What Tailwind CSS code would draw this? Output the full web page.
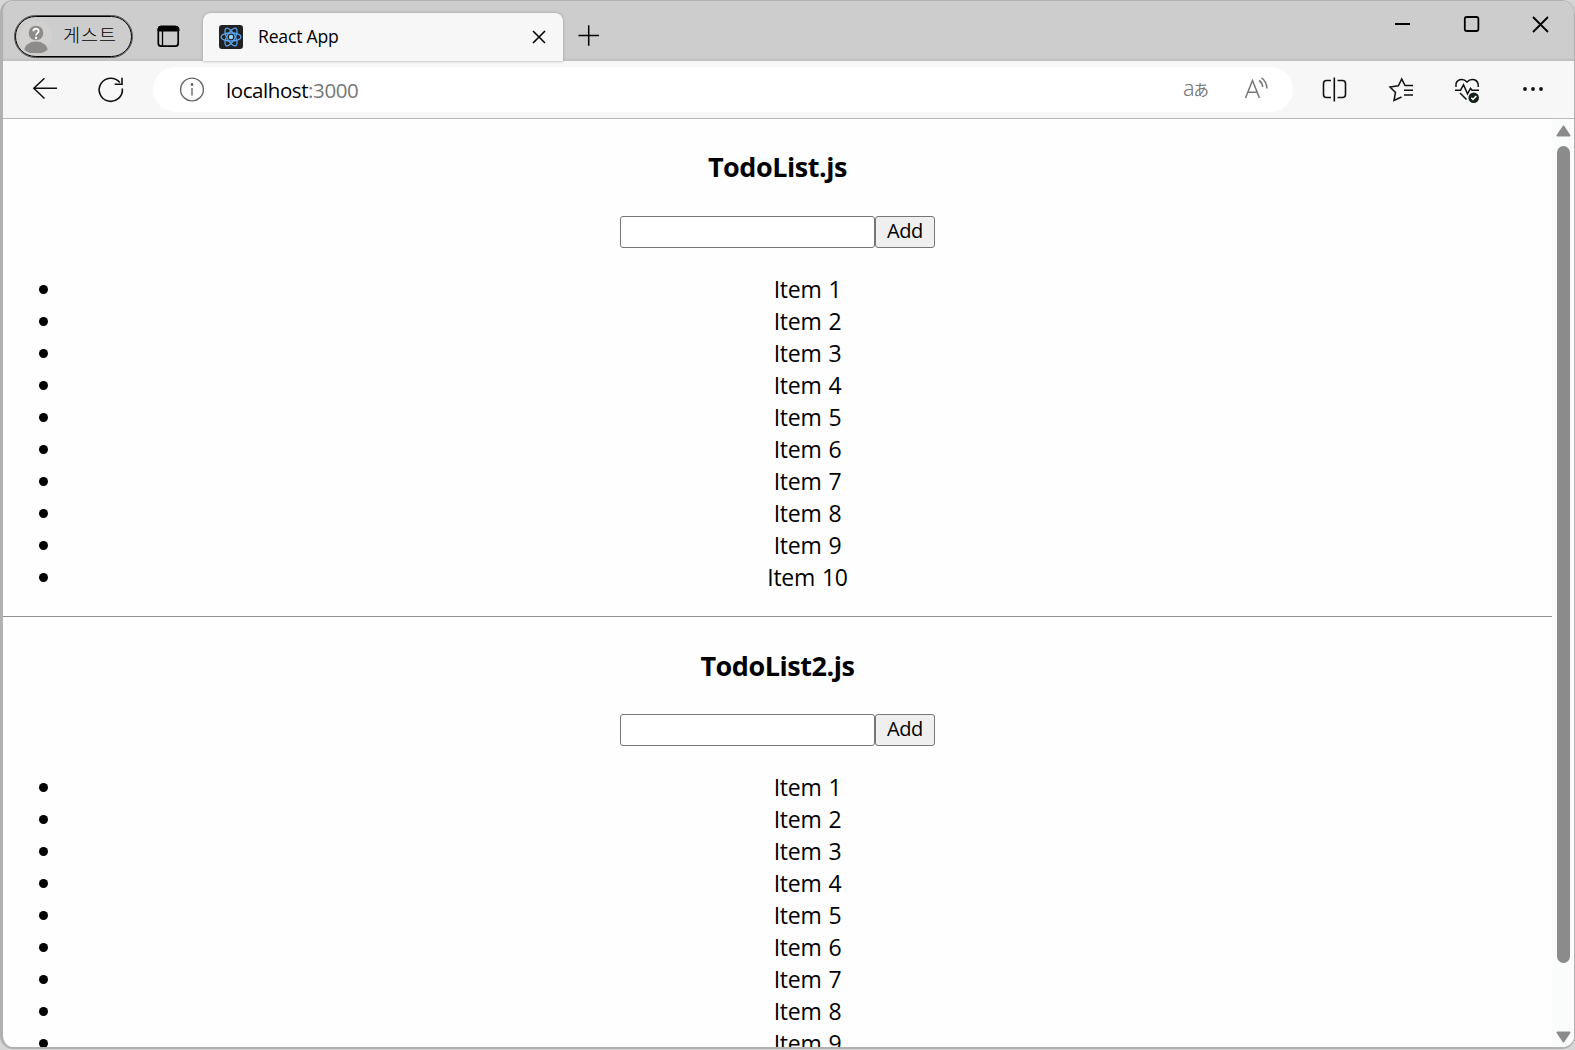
<!DOCTYPE html>
<html lang="ko">
<head>
<meta charset="utf-8">
<title>React App</title>
<script src="https://cdn.jsdelivr.net/npm/@tailwindcss/browser@4"></script>
</head>
<body class="w-[1575px] h-[1050px] overflow-hidden bg-[#d6d6d6] font-['Open_Sans','Noto_Sans_CJK_KR',sans-serif] text-black">
<div class="w-[1575px] h-[1049px] rounded-[13px] border-t border-l-[3px] border-r border-b-2 border-[#b1b1b1] overflow-hidden bg-[#fefefe] flex flex-col">
  <!-- title bar -->
  <header class="h-[60px] shrink-0 bg-[#cdcdcd] flex items-start shadow-[inset_0_-2px_2px_#bfbfbf]">
    <div class="ml-3 mt-[15px] w-[117px] h-[41px] rounded-full border-[1.5px] border-black outline-[.5px] outline-black/60 flex items-center">
      <svg class="ml-[4px] w-8 h-8 shrink-0" viewBox="20 20 32 32"><circle cx="36" cy="36" r="16" fill="#d2d1d0"/><circle cx="36" cy="32" r="7.3" fill="#8d8a8a"/><path d="M24.500 49a11.500 8.500 0 0 1 23 0Q36 57 24.500 49Z" fill="#8d8a8a"/><path d="M33.300 30.300c0-3.400 5.400-3.300 5.400-.2 0 2-2.600 2-2.600 4.300" fill="none" stroke="#fff" stroke-width="1.800"/><circle cx="36.100" cy="37" r="1.200" fill="#fff"/></svg>
      <span class="ml-[11px] -mt-[5px] font-['Noto_Sans_CJK_KR'] font-light text-[18.500px] leading-none tracking-[1px] whitespace-nowrap">게스트</span>
    </div>
    <svg class="ml-[25px] mt-[24px] w-[23px] h-[23px]" viewBox="157 25 23 23"><rect x="158.300" y="26.800" width="19.900" height="19.400" rx="3" fill="none" stroke="#000" stroke-width="1.700"/><path d="M158 31V29q0-3 3-3h14q4 0 4 3v2z" stroke="#000" stroke-width="1"/><path d="M162.500 31v15" stroke="#000" stroke-width="1.300"/></svg>
    <div class="ml-[23px] mt-3 w-[360px] h-12 rounded-t-lg bg-[#f7f7f7] flex items-center shadow-[0_0_3px_#999] z-10">
      <svg class="ml-4 w-6 h-6" viewBox="-12 -12 24 24" fill="none" stroke="#5ba5ee" stroke-width="1.300"><rect x="-12" y="-12" width="24" height="24" rx="3" fill="#222" stroke="none"/><ellipse rx="10" ry="4"/><ellipse rx="10" ry="4" transform="rotate(60)"/><ellipse rx="10" ry="4" transform="rotate(120)"/><circle r="2.200" fill="#8ed5ff" stroke="none"/></svg>
      <span class="ml-[15px] -mt-[2px] text-[17.600px] leading-6 tracking-[-.2px] w-[273px]">React App</span>
      <svg class="w-4 h-4" viewBox="531 29 16 16"><path d="M533 31l12 12M545 31l-12 12" stroke="#000" stroke-width="1.600"/></svg>
    </div>
    <svg class="ml-[14px] mt-[23px] w-6 h-6" viewBox="577 24 24 24"><path d="M578.500 35.500h20.500M588.700 25.300v20.500" stroke="#000" stroke-width="1.500"/></svg>
    <svg class="ml-auto mt-[13px] mr-[22px] w-[160px] h-[22px]" viewBox="1392 14 160 22" fill="none" stroke="#000" stroke-width="1.800"><path d="M1395 24h15M1533 17l15 15M1548 17l-15 15"/><rect x="1464.800" y="17" width="13.600" height="14" rx="2"/></svg>
  </header>
  <!-- address bar -->
  <nav class="h-[58px] shrink-0 bg-[#f7f7f7] border-b border-[#b9b9b9] flex items-center">
    <svg class="ml-[28px] w-8 h-8" viewBox="31 74 32 32" fill="none" stroke="#111" stroke-width="1.500"><path d="M57 88.300H34M44.500 78.200L33.800 88.300l10.700 10.200"/></svg>
    <svg class="ml-[32px] w-8 h-8" viewBox="95 74 32 32" fill="none" stroke="#111" stroke-width="1.600"><path d="M122.300 88.500a11.600 11.600 0 1 1-2.500-6M122 77.800v6.500h-7.300"/></svg>
    <div class="ml-[26px] w-[1140px] h-[45px] rounded-full bg-white flex items-center text-[#777]">
      <svg class="ml-[26px] w-[26px] h-[26px]" viewBox="179 77 26 26" fill="none" stroke="#666" stroke-width="1.400"><circle cx="192" cy="89.500" r="11.400"/><path d="M192 88v7.500"/><circle cx="192" cy="84.500" r=".7" fill="#666"/></svg>
      <span class="ml-[21px] text-[20.500px] leading-7 tracking-[-.42px]"><span class="text-black">localhost</span>:3000</span>
      <div class="ml-auto mr-[84px] -mt-[3px] flex items-baseline leading-6"><span class="text-[21.500px] font-['Noto_Sans'] font-light">a</span><span class="text-[15.500px] -ml-px font-['Noto_Sans_CJK_JP']">あ</span></div>
      <svg class="absolute left-[1242px] top-[74px] w-[30px] h-[28px]" viewBox="1242 74 30 28" fill="none" stroke="#777" stroke-width="1.500"><path d="M1245.500 98l7-17.500 7 17.500M1248 92.300h9.300M1259 80.500q3.200 2 3.700 6.500M1261.500 77.800q5 3.500 5.500 10.700"/></svg>
    </div>
    <svg class="ml-[25px] w-8 h-8" viewBox="1318 74 32 32" fill="none" stroke="#111" stroke-width="1.600"><path d="M1331 80.500h-4.500q-3 0-3 3v11q0 3 3 3h4.500M1337.500 80.500h5q3 0 3 3v11q0 3-3 3h-5M1334.300 77.500v24"/></svg>
    <svg class="ml-[34px] w-8 h-8" viewBox="1384 74 32 32" fill="none" stroke="#111" stroke-width="1.500"><path d="M1413 85.500h-8l-3.300-6.500-3.300 6.800-8.400 1.200 5.500 5.500-1.500 8 7.500-3.500M1404 90.300h9M1404 95h9"/></svg>
    <svg class="ml-[34px] w-8 h-8" viewBox="1450 74 32 32" fill="none" stroke="#111" stroke-width="1.500"><path d="M1456 87c-1-8 7-9.500 11-5 4-4.500 12-3 11.200 5M1455 90.300h5.500l3-5.500 4 9 3-5.500 1.500 2h7M1460 93l6.500 6.500"/><circle cx="1473.700" cy="97.700" r="5.300" fill="#142018" stroke="none"/><path d="M1471.300 97.800l1.700 1.700 3.300-3.500" stroke="#fff"/></svg>
    <svg class="ml-[39px] w-6 h-6" viewBox="1521 78 24 24" fill="#111"><circle cx="1525" cy="89" r="1.900"/><circle cx="1533" cy="89" r="1.900"/><circle cx="1541" cy="89" r="1.900"/></svg>
  </nav>
  <!-- page -->
  <div class="flex-1 min-h-0 flex">
    <main id="page" class="flex-1 min-w-0 overflow-hidden text-center"></main>
    <aside class="w-[22px] shrink-0 bg-[#fafbfb] flex flex-col items-center pl-px">
      <svg class="mt-[6px] w-[15px] h-[12px] shrink-0" viewBox="0 0 15 12"><path d="M7.500 1.500L13.500 10.500H1.500Z" fill="#8b8b8b" stroke="#8b8b8b" stroke-width="2" stroke-linejoin="round"/></svg>
      <div class="mt-[9px] w-[13px] h-[817px] rounded-full bg-[#8b8b8b] shrink-0"></div>
      <svg class="mt-auto mb-[4px] w-[15px] h-[12px] shrink-0" viewBox="0 0 15 12"><path d="M7.500 10.500L13.500 1.500H1.500Z" fill="#8b8b8b" stroke="#8b8b8b" stroke-width="2" stroke-linejoin="round"/></svg>
    </aside>
  </div>
</div>
<script>
const section = title => `
<section class="h-[498px] flex flex-col group">
  <h3 class="mt-[28px] group-last:mt-[29px] h-[40px] group-last:h-[39px] text-[27px] leading-10 font-bold tracking-[-.45px]">${title}</h3>
  <form class="mt-[29px] flex justify-center">
    <input class="w-[255px] h-8 border border-[#767676] rounded-[3px] bg-white">
    <button type="button" class="w-[60px] h-8 border border-[#767676] rounded-[3px] bg-[#efefef] text-[20px] leading-[28px] pb-[2px] tracking-[-.4px]">Add</button>
  </form>
  <ul class="mt-[25px]">${Array.from({length: 10}, (_, i) => `
    <li class="h-8 flex items-center pl-[36px]"><span class="w-[9px] h-[9px] rounded-full bg-black shrink-0"></span><span class="flex-1 pl-[15px] text-[23px] leading-8 tracking-[-.25px] [word-spacing:1.2px]">Item ${i + 1}</span></li>`).join('')}
  </ul>
  <hr class="mt-[23px] border-0 h-[2px] bg-[#ededed] border-t border-t-[#929292]">
</section>`;
document.getElementById('page').innerHTML = section('TodoList.js') + section('TodoList2.js');
</script>
</body>
</html>
